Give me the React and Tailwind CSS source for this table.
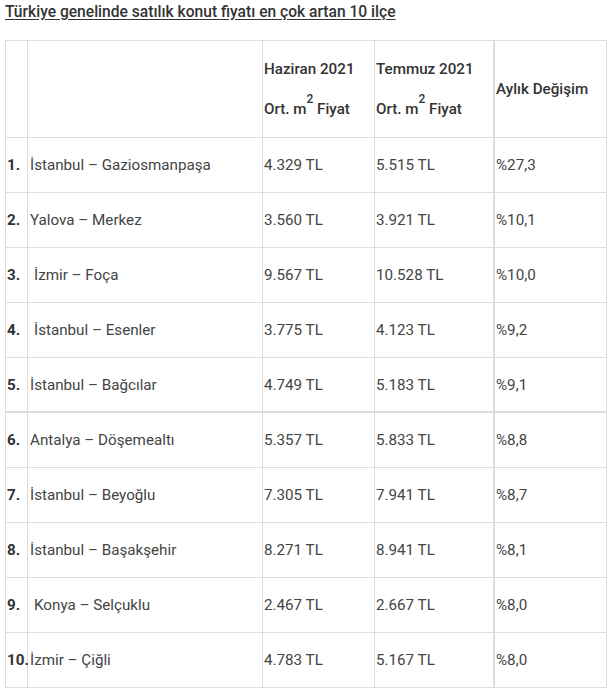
import React from 'react';

const ROWS = [
    ['1.', 'İstanbul – Gaziosmanpaşa', '4.329 TL', '5.515 TL', '%27,3', false],
    ['2.', 'Yalova – Merkez', '3.560 TL', '3.921 TL', '%10,1', false],
    ['3.', 'İzmir – Foça', '9.567 TL', '10.528 TL', '%10,0', true],
    ['4.', 'İstanbul – Esenler', '3.775 TL', '4.123 TL', '%9,2', true],
    ['5.', 'İstanbul – Bağcılar', '4.749 TL', '5.183 TL', '%9,1', false],
    ['6.', 'Antalya – Döşemealtı', '5.357 TL', '5.833 TL', '%8,8', false],
    ['7.', 'İstanbul – Beyoğlu', '7.305 TL', '7.941 TL', '%8,7', false],
    ['8.', 'İstanbul – Başakşehir', '8.271 TL', '8.941 TL', '%8,1', false],
    ['9.', 'Konya – Selçuklu', '2.467 TL', '2.667 TL', '%8,0', true],
    ['10.', 'İzmir – Çiğli', '4.783 TL', '5.167 TL', '%8,0', false],
];

export default function App() {
    return (
        <div className="bg-white min-h-screen px-[5px] pt-[2px] text-[15.2px] leading-5 text-[#444]" style={{ fontFamily: 'Roboto, "Liberation Sans", sans-serif' }}>
            <p className="text-[15.6px] font-medium text-[#333] underline underline-offset-2">
                Türkiye genelinde satılık konut fiyatı en çok artan 10 ilçe
            </p>

            <div className="mt-[18px] w-[602px] grid grid-cols-[22px_235px_112px_120px_112px] border-t border-l border-[#ddd]">
                {/* header */}
                <div className="h-[97px] border-r border-b border-[#ddd]"></div>
                <div className="h-[97px] border-r border-b border-[#ddd]"></div>
                <div className="h-[97px] border-r border-b border-[#ddd] flex flex-col justify-center gap-5 pl-[1px] font-medium text-[#333]">
                    <span>Haziran 2021</span>
                    <span>Ort. m<sup className="text-[12px] align-[5px]">2</sup> Fiyat</span>
                </div>
                <div className="h-[97px] border-r-2 border-b border-[#ddd] flex flex-col justify-center gap-5 pl-[1px] font-medium text-[#333]">
                    <span>Temmuz 2021</span>
                    <span>Ort. m<sup className="text-[12px] align-[5px]">2</sup> Fiyat</span>
                </div>
                <div className="h-[97px] border-r border-b border-[#ddd] flex items-center pl-[1px] font-medium text-[#333]">
                    Aylık Değişim
                </div>

                {ROWS.map((r, i) => {
                    const bottom = i === 4 ? 'border-b-2' : 'border-b';
                    return (
                        <React.Fragment key={i}>
                            <div className={`h-[55px] ${bottom} border-r border-[#ddd] flex items-center pl-[1px] font-bold text-[#333]`}>{r[0]}</div>
                            <div className={`h-[55px] ${bottom} border-r border-[#ddd] flex items-center ${r[5] ? 'pl-[6px]' : 'pl-[2px]'}`}>{r[1]}</div>
                            <div className={`h-[55px] ${bottom} border-r border-[#ddd] flex items-center pl-[1px]`}>{r[2]}</div>
                            <div className={`h-[55px] ${bottom} border-r-2 border-[#ddd] flex items-center pl-[1px]`}>{r[3]}</div>
                            <div className={`h-[55px] ${bottom} border-r border-[#ddd] flex items-center pl-[1px]`}>{r[4]}</div>
                        </React.Fragment>
                    );
                })}
            </div>
        </div>
    );
}
